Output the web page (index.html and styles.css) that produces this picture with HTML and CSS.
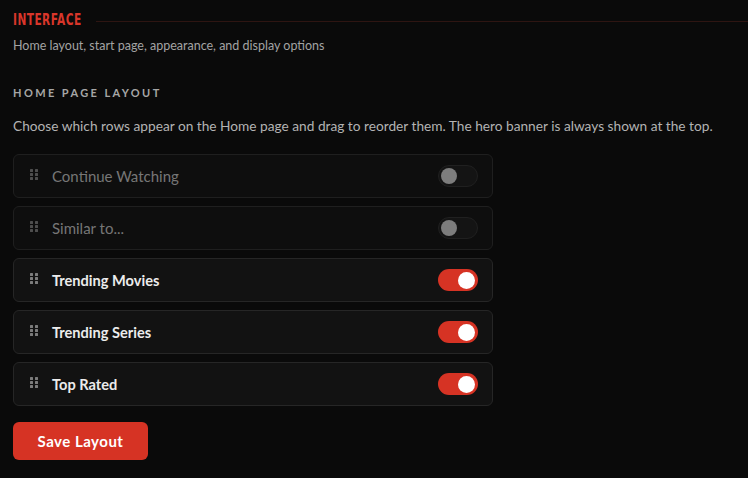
FILE: index.html
```html
<!DOCTYPE html>
<html lang="en">
<head>
<meta charset="utf-8">
<title>Interface</title>
<link rel="stylesheet" href="styles.css">
</head>
<body>
<main class="panel">
  <header class="section-head">
    <h1 class="section-title">INTERFACE</h1>
    <span class="section-rule"></span>
  </header>
  <p class="section-sub">Home layout, start page, appearance, and display options</p>

  <h2 class="group-title">HOME PAGE LAYOUT</h2>
  <p class="group-desc">Choose which rows appear on the Home page and drag to reorder them. The hero banner is always shown at the top.</p>

  <ul class="rows">
    <li class="row row-off">
      <span class="grip"><i></i><i></i><i></i><i></i><i></i><i></i></span>
      <span class="row-label">Continue Watching</span>
      <span class="toggle"><span class="knob"></span></span>
    </li>
    <li class="row row-off">
      <span class="grip"><i></i><i></i><i></i><i></i><i></i><i></i></span>
      <span class="row-label">Similar to...</span>
      <span class="toggle"><span class="knob"></span></span>
    </li>
    <li class="row row-on">
      <span class="grip"><i></i><i></i><i></i><i></i><i></i><i></i></span>
      <span class="row-label">Trending Movies</span>
      <span class="toggle"><span class="knob"></span></span>
    </li>
    <li class="row row-on">
      <span class="grip"><i></i><i></i><i></i><i></i><i></i><i></i></span>
      <span class="row-label">Trending Series</span>
      <span class="toggle"><span class="knob"></span></span>
    </li>
    <li class="row row-on">
      <span class="grip"><i></i><i></i><i></i><i></i><i></i><i></i></span>
      <span class="row-label">Top Rated</span>
      <span class="toggle"><span class="knob"></span></span>
    </li>
  </ul>

  <button class="save-btn" type="button">Save Layout</button>
</main>
</body>
</html>
```

FILE: styles.css
```css
html, body {
  margin: 0;
  padding: 0;
  background: #0a0a0a;
  height: 100%;
  overflow: hidden;
}

body {
  font-family: "Lato", "Noto Sans", sans-serif;
  color: #e6e6e6;
}

.panel {
  padding: 10px 0 0 13px;
}

.section-head {
  display: flex;
  align-items: center;
  gap: 15px;
  height: 21px;
}

.section-title {
  margin: 0;
  font-family: "DejaVu Sans Condensed", "DejaVu Sans", sans-serif;
  font-stretch: condensed;
  font-weight: 700;
  font-size: 15.5px;
  letter-spacing: 0.6px;
  color: #d9362a;
  line-height: 21px;
  display: inline-block;
  width: 68px;
  white-space: nowrap;
  transform: scaleX(0.76);
  transform-origin: left center;
}

.section-rule {
  flex: 1;
  height: 1px;
  margin-top: 1px;
  background: #2e1512;
}

.section-sub {
  margin: 7px 0 0;
  font-size: 12.5px;
  color: #a3a3a3;
  line-height: 16px;
}

.group-title {
  margin: 32px 0 0;
  font-size: 11px;
  font-weight: 700;
  letter-spacing: 2.4px;
  color: #a6a6a6;
  line-height: 14px;
}

.group-desc {
  margin: 17px 0 0;
  font-size: 13.7px;
  color: #b3b3b3;
  line-height: 17px;
}

.rows {
  list-style: none;
  margin: 20px 0 0;
  padding: 0;
  width: 480px;
  display: flex;
  flex-direction: column;
  gap: 8px;
}

.row {
  height: 42px;
  border: 1px solid #262626;
  border-radius: 6px;
  background: #121212;
  display: flex;
  align-items: center;
  padding: 0 14px 0 16px;
}

.row-off {
  background: #0e0e0e;
  border-color: #1f1f1f;
}

.grip {
  display: grid;
  grid-template-columns: 3px 3px;
  column-gap: 2px;
  row-gap: 1px;
  width: 8px;
  margin-top: -4px;
  margin-right: 14px;
}

.grip i {
  display: block;
  width: 3px;
  height: 3px;
  border-radius: 0.5px;
  background: #7c7c7c;
}

.row-off .grip i {
  background: #4e4e4e;
}

.row-label {
  flex: 1;
  font-size: 14.6px;
  font-weight: 700;
  color: #ececec;
}

.row-off .row-label {
  font-size: 15px;
  font-weight: 400;
  color: #767676;
}

.toggle {
  width: 40px;
  height: 22px;
  border-radius: 11px;
  display: flex;
  align-items: center;
  box-sizing: border-box;
  padding: 0 3px;
}

.row-on .toggle {
  background: #d63324;
  justify-content: flex-end;
}

.row-off .toggle {
  background: #141414;
  border: 1px solid #202020;
  justify-content: flex-start;
  padding: 0 2px;
}

.knob {
  width: 17px;
  height: 17px;
  border-radius: 50%;
  background: #ffffff;
}

.row-off .knob {
  width: 16px;
  height: 16px;
  background: #7d7d7d;
}

.save-btn {
  margin-top: 16px;
  width: 135px;
  height: 38px;
  border: none;
  border-radius: 6px;
  background: #d63324;
  color: #ffffff;
  font-family: "Lato", "Noto Sans", sans-serif;
  font-size: 15px;
  font-weight: 700;
  letter-spacing: 0.5px;
  cursor: pointer;
}
```
